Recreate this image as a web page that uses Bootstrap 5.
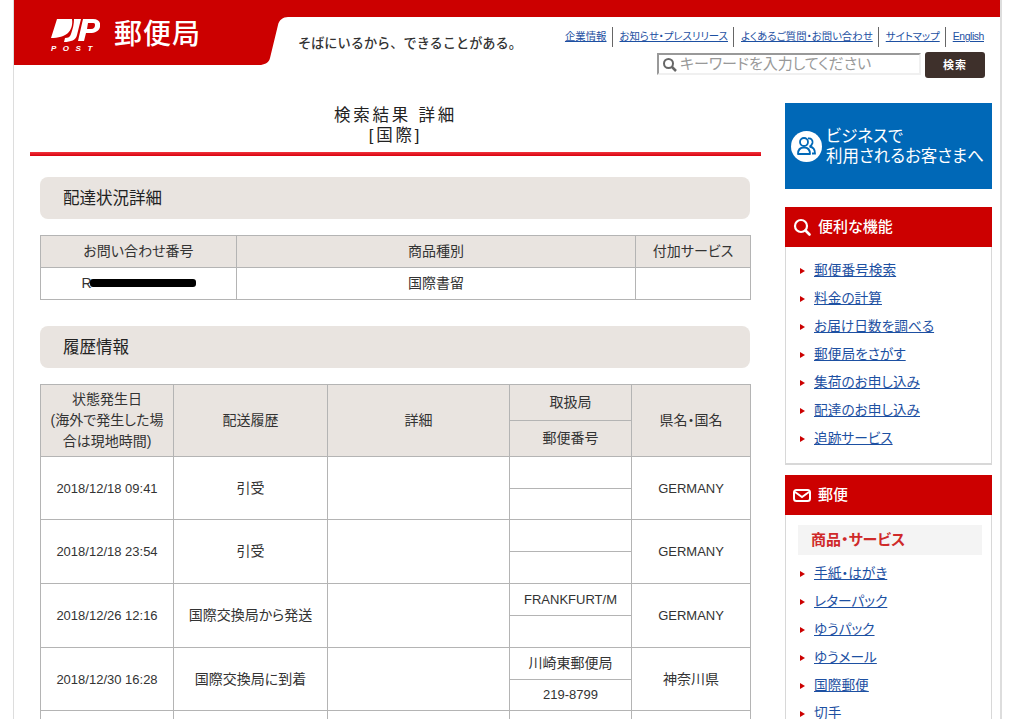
<!DOCTYPE html>
<html lang="ja">
<head>
  <title>郵便局 検索結果 詳細</title>
  <meta charset="utf-8" />
  <link href="https://cdn.jsdelivr.net/npm/bootstrap@5.3.0/dist/css/bootstrap.min.css" rel="stylesheet">
  <style>
    html, body {
      height: 719px;
      overflow: hidden;
    }
    body {
      font-family: "Liberation Sans", "Noto Sans CJK JP", sans-serif;
      font-feature-settings: "palt";
      background: #fff;
      color: #333;
      font-size: 14px;
    }
    a { color: #1d50a2; }
    .page-shell {
      width: 989px;
      margin-left: 13px;
      border-left: 1px solid #ddd;
      border-right: 2px solid #ddd;
      height: 719px;
      overflow: hidden;
    }
    .site-head {
      border-top: 17px solid #cc0000;
      height: 103px;
    }
    .logo-block {
      width: 244px;
      height: 48px;
      background: #cc0000;
      padding-left: 36px;
      color: #fff;
    }
    .logo-mark { width: 52px; }
    .logo-mark svg { display: block; width: 50px; height: 26px; }
    .logo-post {
      font: italic bold 8px/9px "Liberation Sans", sans-serif;
      letter-spacing: 6.500px;
      padding: 1px 0 0 1px;
    }
    .logo-name {
      font-size: 28px;
      font-weight: 500;
      line-height: 32px;
      margin: 2px 0 0 12px;
      letter-spacing: 1px;
    }
    .logo-tail { width: 30px; height: 48px; display: block; }
    .tagline {
      font-size: 13.200px;
      font-weight: 500;
      font-feature-settings: normal;
      color: #333;
      margin: 19px 0 0 10px;
      line-height: 16px;
      white-space: nowrap;
    }
    .head-tools { margin-left: auto; padding-right: 15px; }
    .util-nav {
      font-size: 10.400px;
      line-height: 20px;
      margin-top: 10px;
      white-space: nowrap;
    }
    .util-nav a { padding: 0 5px 0 7px; border-left: 1px solid #666; display: inline-block; }
    .util-nav a:first-child { border-left: 0; }
    .util-nav a:last-child { padding-right: 1px; letter-spacing: -.4px; }
    .search-row { margin-top: 5px; gap: 4px; }
    .search-box {
      width: 264px;
      height: 22px;
      border: 2px solid #f0f0f0;
      border-top-color: #999;
      border-left-color: #999;
      color: #999;
      font-size: 15px;
      line-height: 18px;
      padding-left: 3px;
      gap: 3px;
      margin-top: 1px;
    }
    .search-go {
      width: 60px;
      height: 26px;
      background: #3e302b;
      color: #fff;
      font-size: 11px;
      font-weight: 700;
      line-height: 26px;
      text-align: center;
      border-radius: 3px;
      letter-spacing: 1px;
    }
    .main-col { width: 731px; margin-left: 16px; }
    .side-col { width: 207px; margin-left: 24px; }
    .page-title {
      font-size: 16.500px;
      font-weight: 400;
      font-feature-settings: normal;
      line-height: 20px;
      letter-spacing: 2.800px;
      text-align: center;
      color: #222;
      margin: 2px 0 0;
      padding-bottom: 7px;
    }
    .title-rule {
      height: 4px;
      background: linear-gradient(#f0343c, #d8000f);
    }
    .main-inner { padding: 21px 11px 0 10px; }
    .sec-head {
      height: 42px;
      background: #e9e4e0;
      border-radius: 8px;
      font-size: 16.500px;
      font-weight: 400;
      line-height: 42px;
      padding-left: 23px;
      color: #222;
      margin-bottom: 16px;
    }
    .track-table {
      table-layout: fixed;
      width: 710px;
      border-collapse: collapse;
      font-size: 14px;
      color: #333;
      margin-bottom: 26px;
    }
    .track-table th, .track-table td {
      border: 1px solid #b4b4b4;
      text-align: center;
      vertical-align: middle;
      padding: 0 4px;
      font-weight: 400;
      line-height: 21px;
    }
    .track-table th { background: #e9e4e0; }
    .info-row th, .info-row td { height: 32px; }
    .when { font-size: 13px; }
    .hist-table th.half-head { height: 36px; }
    .hist-table td { height: 31.500px; }
    .hist-table tr.tall-row td { height: 32px; }
    .black-out {
      display: inline-block;
      width: 106px;
      height: 8px;
      background: #000;
      border-radius: 3px;
      vertical-align: 1px;
      margin-left: -2px;
    }
    .side-banner {
      height: 86px;
      background: #0068b7;
      color: #fff;
      font-size: 16.500px;
      line-height: 20px;
      padding-left: 6px;
      gap: 4px;
      margin-bottom: 18px;
      white-space: nowrap;
    }
    .side-head {
      height: 40px;
      background: #cc0000;
      color: #fff;
      font-size: 15px;
      font-weight: 500;
      padding-left: 8px;
      gap: 7px;
    }
    .side-body {
      border: 1px solid #d8d8d8;
      border-top: 0;
      border-bottom-width: 2px;
      padding: 9px 0 11px;
      margin-bottom: 10px;
    }
    .side-sub {
      margin: 1px 9px 4px 12px;
      height: 30px;
      background: #f4f4f4;
      color: #cf2a2a;
      font-size: 15px;
      font-weight: 700;
      line-height: 30px;
      padding-left: 13px;
    }
    .side-links { margin: 0; padding: 0; list-style: none; }
    .side-links li {
      height: 28px;
      line-height: 30px;
      font-size: 13.700px;
      padding-left: 28px;
      position: relative;
    }
    .side-links li::before {
      content: "";
      position: absolute;
      left: 14px;
      top: 12px;
      border-left: 5px solid #cc0000;
      border-top: 3px solid transparent;
      border-bottom: 3px solid transparent;
    }
  </style>
</head>
<body>
  <div class="page-shell">
    <header class="site-head d-flex">
      <div class="logo-block d-flex">
        <div class="logo-mark">
          <svg viewBox="0 0 50 26">
            <path d="M7 2H22C23 8 21 13 18 16C15 19 8 21 1 21C3 15 5 8 7 2Z" fill="#fff"/>
            <path d="M24 2H31L27 18C26 23 21 25 14 25L15 21C18 21 20 20 21 17C23 11 24 7 24 2Z" fill="#fff"/>
            <path d="M33 2H43C49 2 51 6 50 10C49 14 45 16 40 16H36L34 24H28ZM38 6L37 12H41C44 12 45 10 45 8C45 6 44 6 42 6Z" fill="#fff" fill-rule="evenodd"/>
          </svg>
          <div class="logo-post">POST</div>
        </div>
        <div class="logo-name">郵便局</div>
      </div>
      <svg class="logo-tail" viewBox="0 0 30 48"><path d="M0 0H30C25 0 21 3 20 8L12 41C11 45 8 47 3 48H0Z" fill="#cc0000"/></svg>
      <div class="tagline">そばにいるから、できることがある。</div>
      <div class="head-tools">
        <nav class="util-nav d-flex justify-content-end">
          <a href="#">企業情報</a>
          <a href="#">お知らせ・プレスリリース</a>
          <a href="#">よくあるご質問・お問い合わせ</a>
          <a href="#">サイトマップ</a>
          <a href="#">English</a>
        </nav>
        <div class="search-row d-flex justify-content-end">
          <div class="search-box d-flex align-items-center">
            <svg width="15" height="15" viewBox="0 0 15 15"><circle cx="6.500" cy="6.500" r="4.500" fill="none" stroke="#666" stroke-width="2"/><path d="M10 10L14 14" stroke="#666" stroke-width="2.500"/></svg>
            <span>キーワードを入力してください</span>
          </div>
          <div class="search-go">検索</div>
        </div>
      </div>
    </header>

    <div class="d-flex">
      <main class="main-col">
        <h1 class="page-title">検索結果 詳細<br>[国際]</h1>
        <div class="title-rule"></div>
        <div class="main-inner">
          <div class="sec-head">配達状況詳細</div>
          <table class="track-table info-row">
            <colgroup><col style="width:196px"><col style="width:399px"><col style="width:115px"></colgroup>
            <tr><th>お問い合わせ番号</th><th>商品種別</th><th>付加サービス</th></tr>
            <tr><td>R<span class="black-out"></span></td><td>国際書留</td><td></td></tr>
          </table>

          <div class="sec-head">履歴情報</div>
          <table class="track-table hist-table">
            <colgroup><col style="width:133px"><col style="width:154px"><col style="width:182px"><col style="width:122px"><col style="width:119px"></colgroup>
            <tr>
              <th rowspan="2">状態発生日<br>(海外で発生した場<br>合は現地時間)</th>
              <th rowspan="2">配送履歴</th>
              <th rowspan="2">詳細</th>
              <th class="half-head">取扱局</th>
              <th rowspan="2">県名・国名</th>
            </tr>
            <tr><th class="half-head">郵便番号</th></tr>
            <tr><td rowspan="2" class="when">2018/12/18 09:41</td><td rowspan="2">引受</td><td rowspan="2"></td><td></td><td rowspan="2" class="when">GERMANY</td></tr>
            <tr><td></td></tr>
            <tr class="tall-row"><td rowspan="2" class="when">2018/12/18 23:54</td><td rowspan="2">引受</td><td rowspan="2"></td><td></td><td rowspan="2" class="when">GERMANY</td></tr>
            <tr class="tall-row"><td></td></tr>
            <tr class="tall-row"><td rowspan="2" class="when">2018/12/26 12:16</td><td rowspan="2">国際交換局から発送</td><td rowspan="2"></td><td class="when">FRANKFURT/M</td><td rowspan="2" class="when">GERMANY</td></tr>
            <tr class="tall-row"><td></td></tr>
            <tr><td rowspan="2" class="when">2018/12/30 16:28</td><td rowspan="2">国際交換局に到着</td><td rowspan="2"></td><td>川崎東郵便局</td><td rowspan="2">神奈川県</td></tr>
            <tr><td class="when">219-8799</td></tr>
            <tr><td rowspan="2"></td><td rowspan="2"></td><td rowspan="2"></td><td></td><td rowspan="2"></td></tr>
            <tr><td></td></tr>
          </table>
        </div>
      </main>

      <aside class="side-col">
        <div class="side-banner d-flex align-items-center">
          <svg width="31" height="31" viewBox="0 0 31 31"><circle cx="15.500" cy="15.500" r="15.500" fill="#fff"/><circle cx="13" cy="11" r="4" fill="none" stroke="#0068b7" stroke-width="1.800"/><path d="M7 23C7 18 9 16.500 13 16.500C17 16.500 19 18 19 23Z" fill="none" stroke="#0068b7" stroke-width="1.800" stroke-linejoin="round"/><path d="M17 7.500C20 7 22 9 21.500 12C21 14 20 15 18.500 15.500C22 16 24 18 24 22.500H21" fill="none" stroke="#0068b7" stroke-width="1.800"/></svg>
          <div>ビジネスで<br>利用されるお客さまへ</div>
        </div>

        <div class="side-head d-flex align-items-center">
          <svg width="18" height="18" viewBox="0 0 18 18"><circle cx="8" cy="8" r="6" fill="none" stroke="#fff" stroke-width="2.200"/><path d="M12.500 12.500L16.500 16.500" stroke="#fff" stroke-width="2.600" stroke-linecap="round"/></svg>
          <span>便利な機能</span>
        </div>
        <div class="side-body">
          <ul class="side-links">
            <li><a href="#">郵便番号検索</a></li>
            <li><a href="#">料金の計算</a></li>
            <li><a href="#">お届け日数を調べる</a></li>
            <li><a href="#">郵便局をさがす</a></li>
            <li><a href="#">集荷のお申し込み</a></li>
            <li><a href="#">配達のお申し込み</a></li>
            <li><a href="#">追跡サービス</a></li>
          </ul>
        </div>

        <div class="side-head d-flex align-items-center">
          <svg width="18" height="13" viewBox="0 0 18 13"><rect x="1" y="1" width="16" height="11" rx="2.500" fill="none" stroke="#fff" stroke-width="2"/><path d="M2 3L9 8L16 3" fill="none" stroke="#fff" stroke-width="2"/></svg>
          <span>郵便</span>
        </div>
        <div class="side-body">
          <div class="side-sub">商品・サービス</div>
          <ul class="side-links">
            <li><a href="#">手紙・はがき</a></li>
            <li><a href="#">レターパック</a></li>
            <li><a href="#">ゆうパック</a></li>
            <li><a href="#">ゆうメール</a></li>
            <li><a href="#">国際郵便</a></li>
            <li><a href="#">切手</a></li>
          </ul>
        </div>
      </aside>
    </div>
  </div>
  <script src="https://cdn.jsdelivr.net/npm/bootstrap@5.3.0/dist/js/bootstrap.bundle.min.js"></script>
</body>
</html>
